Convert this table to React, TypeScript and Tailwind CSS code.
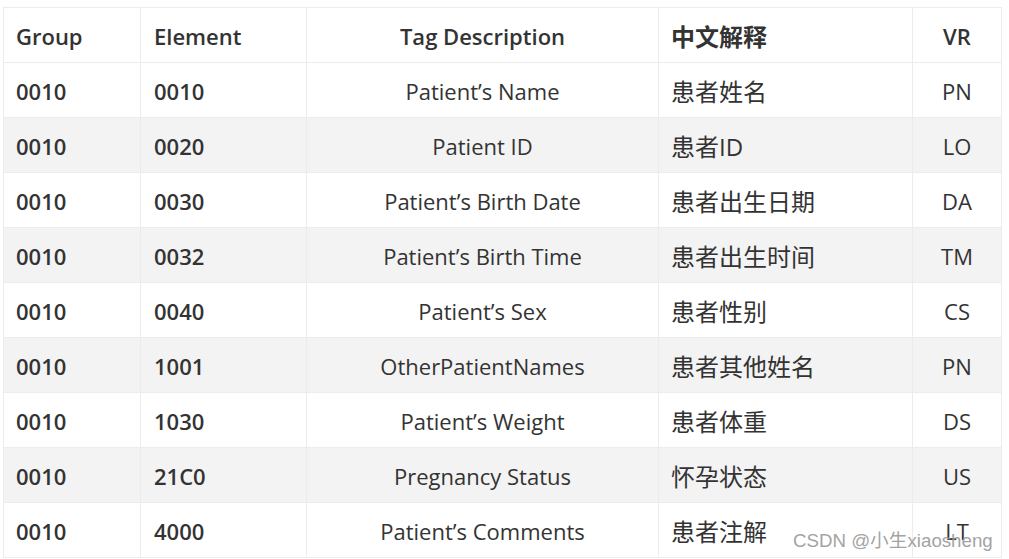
import React from "react";

const rows: [string, string, string, string, string][] = [
  ["0010", "0010", "Patient’s Name", "患者姓名", "PN"],
  ["0010", "0020", "Patient ID", "患者ID", "LO"],
  ["0010", "0030", "Patient’s Birth Date", "患者出生日期", "DA"],
  ["0010", "0032", "Patient’s Birth Time", "患者出生时间", "TM"],
  ["0010", "0040", "Patient’s Sex", "患者性别", "CS"],
  ["0010", "1001", "OtherPatientNames", "患者其他姓名", "PN"],
  ["0010", "1030", "Patient’s Weight", "患者体重", "DS"],
  ["0010", "21C0", "Pregnancy Status", "怀孕状态", "US"],
  ["0010", "4000", "Patient’s Comments", "患者注解", "LT"],
];

const cjk = "text-[24px]";

export default function App() {
  return (
    <div
      className="relative w-[1009px] h-[559px] overflow-hidden bg-white pl-[3px] pt-[7px] text-[#333]"
      style={{ fontFamily: '"Open Sans", "Noto Sans CJK SC", sans-serif' }}
    >
      <table className="border-collapse text-[22px] table-fixed w-[999px]">
        <colgroup>
          <col className="w-[137px]" />
          <col className="w-[166px]" />
          <col className="w-[352px]" />
          <col className="w-[254px]" />
          <col className="w-[89px]" />
        </colgroup>
        <thead>
          <tr className="h-[55px]">
            <th className="border border-[#ececec] px-[12px] pt-[3px] text-left font-semibold">Group</th>
            <th className="border border-[#ececec] px-[13px] pt-[3px] text-left font-semibold">Element</th>
            <th className="border border-[#ececec] pt-[3px] text-center font-semibold">Tag Description</th>
            <th className={`border border-[#ececec] px-[12px] pt-[3px] text-left font-bold ${cjk}`}>中文解释</th>
            <th className="border border-[#ececec] pt-[3px] text-center font-semibold">VR</th>
          </tr>
        </thead>
        <tbody>
          {rows.map((r, i) => (
            <tr key={i} className={`h-[55px] ${i % 2 === 1 ? "bg-[#f3f3f3]" : "bg-white"}`}>
              <td className="border border-[#ececec] px-[12px] pt-[3px] font-semibold">{r[0]}</td>
              <td className="border border-[#ececec] px-[13px] pt-[3px] font-semibold">{r[1]}</td>
              <td className="border border-[#ececec] pt-[3px] text-center">{r[2]}</td>
              <td className={`border border-[#ececec] px-[12px] pt-[3px] ${cjk}`}>{r[3]}</td>
              <td className="border border-[#ececec] pt-[3px] text-center">{r[4]}</td>
            </tr>
          ))}
        </tbody>
      </table>
      <div
        className="absolute left-[793px] top-[527px] text-[18.7px] text-[#9a9a9a] opacity-90"
        style={{ fontFamily: '"Liberation Sans", "Noto Sans CJK SC", sans-serif' }}
      >
        CSDN @小生xiaosheng
      </div>
    </div>
  );
}
